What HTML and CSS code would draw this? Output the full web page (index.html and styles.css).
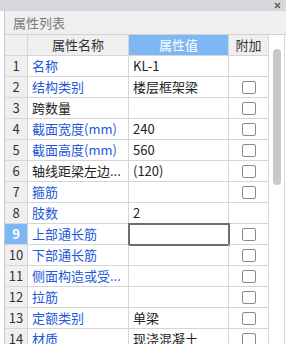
FILE: index.html
```html
<!DOCTYPE html>
<html>
<head>
<meta charset="utf-8">
<title>属性列表</title>
<link rel="stylesheet" href="styles.css">
</head>
<body>
<div class="topbar">
  <svg class="close" width="7" height="7" viewBox="0 0 7 7"><path d="M1 1L6 6M6 1L1 6" stroke="#5a5a5a" stroke-width="1.4"/></svg>
</div>
<div class="panel">
  <div class="title">属性列表</div>
  <div class="body">
    <div class="grid">
      <div class="num head"></div>
      <div class="cell head">属性名称</div>
      <div class="cell head sel">属性值</div>
      <div class="cell head">附加</div>

      <div class="num">1</div><div class="cell blue">名称</div><div class="cell">KL-1</div><div class="cell add"></div>
      <div class="num">2</div><div class="cell blue">结构类别</div><div class="cell">楼层框架梁</div><div class="cell add"><span class="box"></span></div>
      <div class="num">3</div><div class="cell">跨数量</div><div class="cell"></div><div class="cell add"><span class="box"></span></div>
      <div class="num">4</div><div class="cell blue">截面宽度(mm)</div><div class="cell">240</div><div class="cell add"><span class="box"></span></div>
      <div class="num">5</div><div class="cell blue">截面高度(mm)</div><div class="cell">560</div><div class="cell add"><span class="box"></span></div>
      <div class="num">6</div><div class="cell">轴线距梁左边...</div><div class="cell">(120)</div><div class="cell add"><span class="box"></span></div>
      <div class="num">7</div><div class="cell blue">箍筋</div><div class="cell"></div><div class="cell add"><span class="box"></span></div>
      <div class="num">8</div><div class="cell blue">肢数</div><div class="cell">2</div><div class="cell add"></div>
      <div class="num cur">9</div><div class="cell blue">上部通长筋</div><div class="cell edit"></div><div class="cell add"><span class="box"></span></div>
      <div class="num">10</div><div class="cell blue">下部通长筋</div><div class="cell"></div><div class="cell add"><span class="box"></span></div>
      <div class="num">11</div><div class="cell blue">侧面构造或受...</div><div class="cell"></div><div class="cell add"><span class="box"></span></div>
      <div class="num">12</div><div class="cell blue">拉筋</div><div class="cell"></div><div class="cell add"><span class="box"></span></div>
      <div class="num">13</div><div class="cell blue">定额类别</div><div class="cell">单梁</div><div class="cell add"><span class="box"></span></div>
      <div class="num">14</div><div class="cell blue">材质</div><div class="cell">现浇混凝土</div><div class="cell add"><span class="box"></span></div>
    </div>
    <div class="scroll"><div class="thumb"></div></div>
  </div>
</div>
</body>
</html>
```

FILE: styles.css
```css
body {
   margin: 0;
   background-color: white;
   font-family: "Noto Sans CJK SC", "Microsoft YaHei", sans-serif;
   font-size: 13px;
   color: #222;
   overflow: hidden;
}

.topbar {
   height: 11px;
   background-color: #d6d7db;
   display: flex;
   justify-content: flex-end;
   align-items: center;
   padding-right: 5px;
}

.close {
   display: block;
}

.panel {
   margin-left: 4px;
   width: 281px;
   border-left: 1px solid #c9c9c9;
}

.title {
   height: 23px;
   line-height: 23px;
   background-color: #efefef;
   color: #7a7a7a;
   padding-left: 8px;
}

.body {
   display: flex;
   border-top: 1px solid #d2d2d2;
}

.grid {
   display: grid;
   grid-template-columns: 23px 101px 100px 40px;
   grid-auto-rows: 21px;
}

.grid > div {
   box-sizing: border-box;
   border-right: 1px solid #d6d6d6;
   border-bottom: 1px solid #d6d6d6;
   line-height: 20px;
   white-space: nowrap;
   overflow: hidden;
}

.num {
   background-color: #efefef;
   text-align: center;
   color: #333;
}

.num.cur {
   background-color: #7db8f5;
   color: white;
   font-weight: bold;
}

.cell {
   padding-left: 4px;
}

.head {
   background-color: #efefef;
   text-align: center;
   padding-left: 0;
   color: #333;
}

.head.sel {
   background-color: #7db8f5;
   color: white;
}

.blue {
   color: #2157d9;
}

.add {
   display: flex;
   align-items: center;
   justify-content: center;
   padding-left: 0;
}

.box {
   width: 12px;
   height: 11px;
   border: 1px solid #8a8a8a;
   border-radius: 2px;
}

.edit {
   outline: 2px solid #6e6e6e;
   outline-offset: -1px;
}

.scroll {
   width: 16px;
   box-sizing: border-box;
   border-right: 1px solid #d6d6d6;
   padding-top: 14px;
   display: flex;
   justify-content: center;
}

.thumb {
   width: 8px;
   height: 136px;
   border-radius: 4px;
   background-color: #c8c8c8;
}
```
